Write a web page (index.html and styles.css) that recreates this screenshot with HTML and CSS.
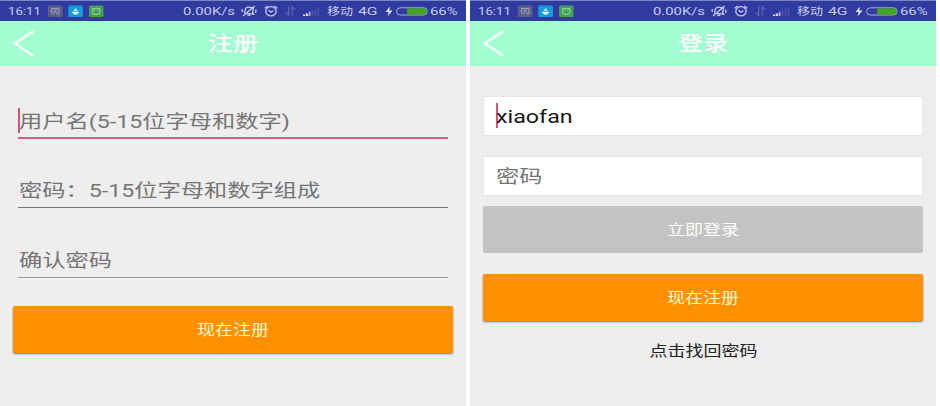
FILE: index.html
```
<!DOCTYPE html>
<html lang="zh-CN">
<head>
<meta charset="utf-8">
<title>注册 / 登录</title>
<link rel="stylesheet" href="styles.css">
</head>
<body>
<svg width="0" height="0" class="defs">
  <symbol id="apps" viewBox="0 0 56 13">
    <rect x="0" y="0.5" width="14.5" height="11.5" rx="1.5" fill="#5c5f88"/>
    <path d="M4.8 8.8L3.6 7.8V3.4h7.4v4.8l-1 1.2L7.3 6.2 4.8 9.2M5.5 5.2H9" fill="none" stroke="#a9abc6" stroke-width=".9"/>
    <rect x="20.3" y="0.5" width="14.7" height="11.5" rx="1.5" fill="#149bdb"/>
    <path d="M25 5.8Q26.6 5.2 27.6 3Q28.6 5.2 30.2 5.8zM24 6.8h7.2Q30.4 9.6 27.6 9.6T24 6.8z" fill="#e7f7ff"/>
    <rect x="41" y="0.5" width="14.5" height="11.5" rx="1.5" fill="#469d5e"/>
    <ellipse cx="48.2" cy="6.4" rx="4" ry="3.2" fill="none" stroke="#9be58c"/>
    <path d="M45 4l-.8-1M51.4 4l.8-1M46.7 5v1M49.7 5v1" stroke="#9be58c" stroke-width=".8"/>
  </symbol>
  <symbol id="mute" viewBox="0 0 16 12">
    <path d="M3.4 8.2L4.6 3.6Q5.4 2 8 2.2L12.4 3.2 11.6 7.4 12.6 9.2 3.4 8.2M6.3 10.2l3 .3M1.2 4v3M14.8 4.5v3.6M2 10.9L13.6 1" fill="none" stroke="#c5c9ee" stroke-width="1.3"/>
  </symbol>
  <symbol id="alarm" viewBox="0 0 14 12">
    <ellipse cx="7" cy="6.3" rx="5.2" ry="4.6" fill="none" stroke="#c5c9ee" stroke-width="1.3"/>
    <path d="M.7 3.3L3.8.9M13.3 3.3L10.2.9M4.6 5.3L7 7.3l2.4-1.5" fill="none" stroke="#c5c9ee" stroke-width="1.3"/>
  </symbol>
  <symbol id="data" viewBox="0 0 11 12">
    <path d="M3.7 1.5v8.7L.8 7.5M7.2 10.5V1.8l3 2.6" fill="none" stroke="#5d66b4" stroke-width="1.3"/>
  </symbol>
  <symbol id="signal" viewBox="0 0 17 11">
    <path d="M0 8.5h2.2V10H0zM2.8 7.4h2.4V10H2.8z" fill="#d3d6f2"/><path d="M5.8 5.8h1.7V10H5.8z" fill="#a9afe0"/>
    <path d="M8.8 4h1.6v6H8.8zM11.8 2.7h1.6V10h-1.6zM14.7 1.2h1.6V10h-1.6z" fill="#4b54aa"/>
  </symbol>
  <symbol id="bolt" viewBox="0 0 8 11"><path d="M5 .5L.5 6H3.6L2.7 10.5 7.5 4.6H4.3z" fill="#d8dbf4"/></symbol>
  <symbol id="battery" viewBox="0 0 32 9">
    <rect x=".6" y=".8" width="30.6" height="7.2" rx="3.6" fill="none" stroke="#a9b0da"/>
    <path d="M11.2 1.3H28Q30.7 1.7 30.7 4.4T28 7.5H11.2z" fill="#43a521"/>
  </symbol>
  <symbol id="back" viewBox="0 0 22 28"><path d="M20.5 1.2L1.8 13.4 20.5 26" fill="none" stroke="#effff5" stroke-width="2.7"/></symbol>
</svg>
<main class="screens">
  <section class="screen">
    <div class="status">
      <span class="time"><b>16:11</b></span><svg class="apps"><use href="#apps"/></svg>
      <span class="speed"><b>0.00K/s</b></span><svg class="mute"><use href="#mute"/></svg><svg class="alarm"><use href="#alarm"/></svg><svg class="data"><use href="#data"/></svg><svg class="signal"><use href="#signal"/></svg>
      <span class="carrier"><b>移动</b></span><span class="net"><b>4G</b></span><svg class="bolt"><use href="#bolt"/></svg><svg class="battery"><use href="#battery"/></svg><span class="level"><b>66%</b></span>
    </div>
    <header class="bar"><svg class="back"><use href="#back"/></svg><h1>注册</h1></header>
    <div class="register">
      <div class="line focus"><i class="caret"></i><span class="wide">用户名(5-15位字母和数字)</span></div>
      <div class="line"><span class="wide">密码：5-15位字母和数字组成</span></div>
      <div class="line thin"><span class="wide">确认密码</span></div>
      <button class="btn orange"><span>现在注册</span></button>
    </div>
  </section>
  <section class="screen">
    <div class="status">
      <span class="time"><b>16:11</b></span><svg class="apps"><use href="#apps"/></svg>
      <span class="speed"><b>0.00K/s</b></span><svg class="mute"><use href="#mute"/></svg><svg class="alarm"><use href="#alarm"/></svg><svg class="data"><use href="#data"/></svg><svg class="signal"><use href="#signal"/></svg>
      <span class="carrier"><b>移动</b></span><span class="net"><b>4G</b></span><svg class="bolt"><use href="#bolt"/></svg><svg class="battery"><use href="#battery"/></svg><span class="level"><b>66%</b></span>
    </div>
    <header class="bar"><svg class="back"><use href="#back"/></svg><h1>登录</h1></header>
    <div class="login">
      <div class="box typed"><i class="caret"></i><span class="wide">xiaofan</span></div>
      <div class="box"><span class="wide">密码</span></div>
      <button class="btn grey"><span>立即登录</span></button>
      <button class="btn orange"><span>现在注册</span></button>
      <a class="forgot"><span>点击找回密码</span></a>
    </div>
  </section>
</main>
</body>
</html>
```
FILE: styles.css
```
* { box-sizing: border-box; }
body { margin: 0; background: #fff; font-family: Roboto, "Noto Sans CJK SC", sans-serif; overflow: hidden; }
.defs { display: block; position: absolute; }
.screens { display: flex; gap: 4px; height: 406px; }
.screen { width: 466px; background: #eee; }

.status { height: 21px; background: #303b9f; border-top: 1px solid #7d84c0; display: flex; align-items: center; padding-left: 8px; color: #c5c9ee; font-size: 11.6px; line-height: 19px; }
.status > * { flex: none; }
.status b { display: inline-block; font-weight: 400; white-space: nowrap; transform: scaleX(1.24); transform-origin: left; }
.status svg { display: block; }
.time { width: 40px; }
.time b { transform: scaleX(1.14); }
.apps { width: 56px; height: 13px; }
.speed { width: 51px; margin-left: 79px; }
.speed b { transform: scaleX(1.28); }
.mute { width: 16px; height: 12px; margin-left: 7px; }
.alarm { width: 14px; height: 12px; margin-left: 7px; }
.data { width: 11px; height: 12px; margin-left: 7px; }
.signal { width: 17px; height: 11px; margin-left: 7px; }
.carrier { width: 25px; margin-left: 7px; font-size: 10.5px; }
.net { width: 19px; margin-left: 5.5px; }
.net b { transform: scaleX(1.36); }
.bolt { width: 8px; height: 11px; margin-left: 8px; }
.battery { width: 32px; height: 9px; margin-left: 3px; }
.level { width: 28px; margin-left: 2px; }
.level b { transform: scaleX(1.28); }

.bar { height: 45px; background: #a2fdd0; display: grid; grid-template-columns: 36px 1fr 36px; align-items: center; }
.back { width: 22px; height: 28px; margin-left: 13px; }
.bar h1 { margin: 0; text-align: center; color: #fff; font-size: 20.5px; line-height: 30px; font-weight: 500; transform: scaleX(1.23); }

.wide { display: inline-block; white-space: nowrap; transform: scaleX(1.25); transform-origin: left; }
.register { padding: 36px 13px 0; }
.line { position: relative; height: 36px; margin: 0 5px 34px; border-bottom: 1px solid #757575; color: #757575; font-size: 18.6px; line-height: 39px; padding-left: .5px; }
.line.focus { height: 37px; margin-bottom: 33px; border-bottom: 2px solid #e0588a; line-height: 40px; }
.line.thin { border-color: #999; margin-bottom: 28px; }
.caret { position: absolute; width: 2px; height: 25px; background: #dc4f83; left: 0; top: 6px; }

.btn { display: flex; align-items: center; justify-content: center; width: 100%; height: 47px; padding: 2px 0 0; border: 0; border-radius: 2px; font: 400 14.5px/20px Roboto, "Noto Sans CJK SC", sans-serif; color: #fff; }
.btn span, .forgot span { display: inline-block; transform: scaleX(1.24); }
.orange { background: #ff9000; box-shadow: 0 1px 2px #777; color: #fffbd5; }
.grey { background: #c3c3c3; }

.login { padding: 30px 13px 0; }
.box { position: relative; height: 40px; margin-bottom: 20px; padding-left: 12px; background: #fff; border: 1px solid #e6e6e6; font-size: 18.6px; line-height: 41px; color: #757575; }
.box.typed { color: #171717; }
.box .caret { left: 12px; }
.box + .btn { margin-top: -10px; margin-bottom: 21px; }
.forgot { display: block; margin-top: 20px; text-align: center; font-size: 14.5px; line-height: 22px; color: #222; }
```
